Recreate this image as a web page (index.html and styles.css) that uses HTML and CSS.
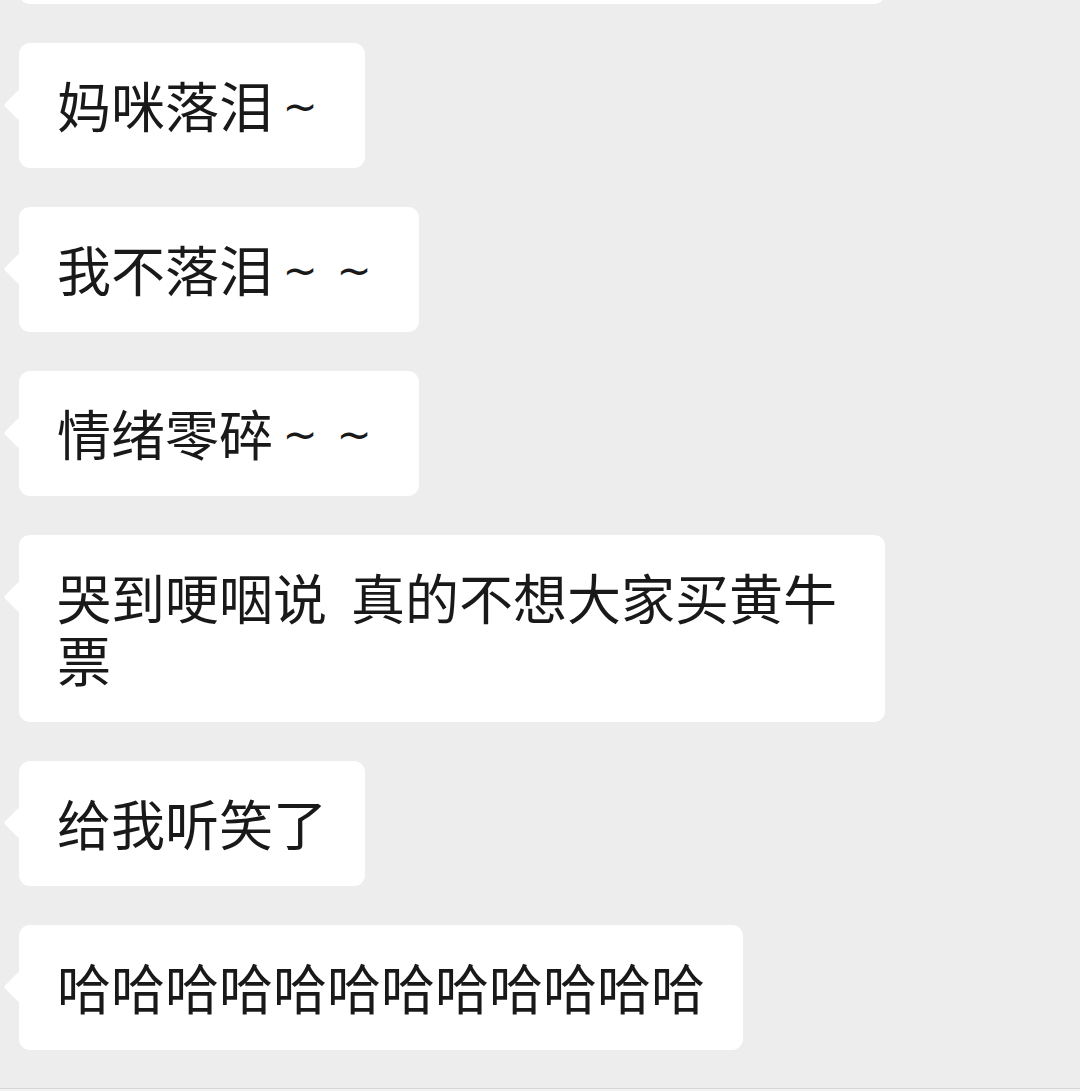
FILE: index.html
```html
<!DOCTYPE html>
<html lang="zh-CN">
<head>
    <meta charset="UTF-8">
    <meta name="viewport" content="width=device-width, initial-scale=1.0">
    <title>聊天</title>
    <link rel="stylesheet" href="styles.css">
</head>
<body>
    <div class="chat">
        <div class="message message-prev">
            <div class="bubble bubble-prev"></div>
        </div>
        <div class="message">
            <div class="bubble">妈咪落泪<span class="tilde">~</span></div>
        </div>
        <div class="message">
            <div class="bubble">我不落泪<span class="tilde">~</span><span class="tilde">~</span></div>
        </div>
        <div class="message">
            <div class="bubble">情绪零碎<span class="tilde">~</span><span class="tilde">~</span></div>
        </div>
        <div class="message">
            <div class="bubble">哭到哽咽说<span class="gap"> </span>真的不想大家买黄牛票</div>
        </div>
        <div class="message">
            <div class="bubble">给我听笑了</div>
        </div>
        <div class="message">
            <div class="bubble">哈哈哈哈哈哈哈哈哈哈哈哈</div>
        </div>
    </div>
    <div class="input-bar"></div>
</body>
</html>
```

FILE: styles.css
```css
html, body { margin: 0; height: 100%; }
body { background-color: #ededed; font-family: "Noto Sans CJK SC", "Noto Sans", sans-serif; color: #191919; overflow: hidden; display: flex; flex-direction: column; }
.chat { flex: 1; display: flex; flex-direction: column; align-items: flex-start; gap: 39px; padding: 0 19px; overflow: hidden; }
.message { display: flex; max-width: 866px; flex-shrink: 0; }
.message-prev { margin-top: -184px; }
.bubble { position: relative; background-color: #fff; border-radius: 11px; padding: 31px 38px 32px; font-size: 54px; line-height: 62px; word-break: break-all; }
/* little pointer on the left edge, next to the first line */
.bubble::before { content: ""; position: absolute; left: -11px; top: 51px; width: 22px; height: 22px; background-color: #fff; border-radius: 3px; transform: rotate(45deg); }
.bubble-prev { width: 790px; height: 125px; }
.bubble-prev::before { display: none; }
.tilde { display: inline-block; width: 54px; height: 62px; text-align: center; vertical-align: top; font-family: "DejaVu Sans", sans-serif; font-size: 42px; line-height: 66px; }
.gap { display: inline-block; width: 24px; }
.input-bar { height: 2px; border-top: 1px solid #d6d6d6; background-color: #f3f3f3; }
```
